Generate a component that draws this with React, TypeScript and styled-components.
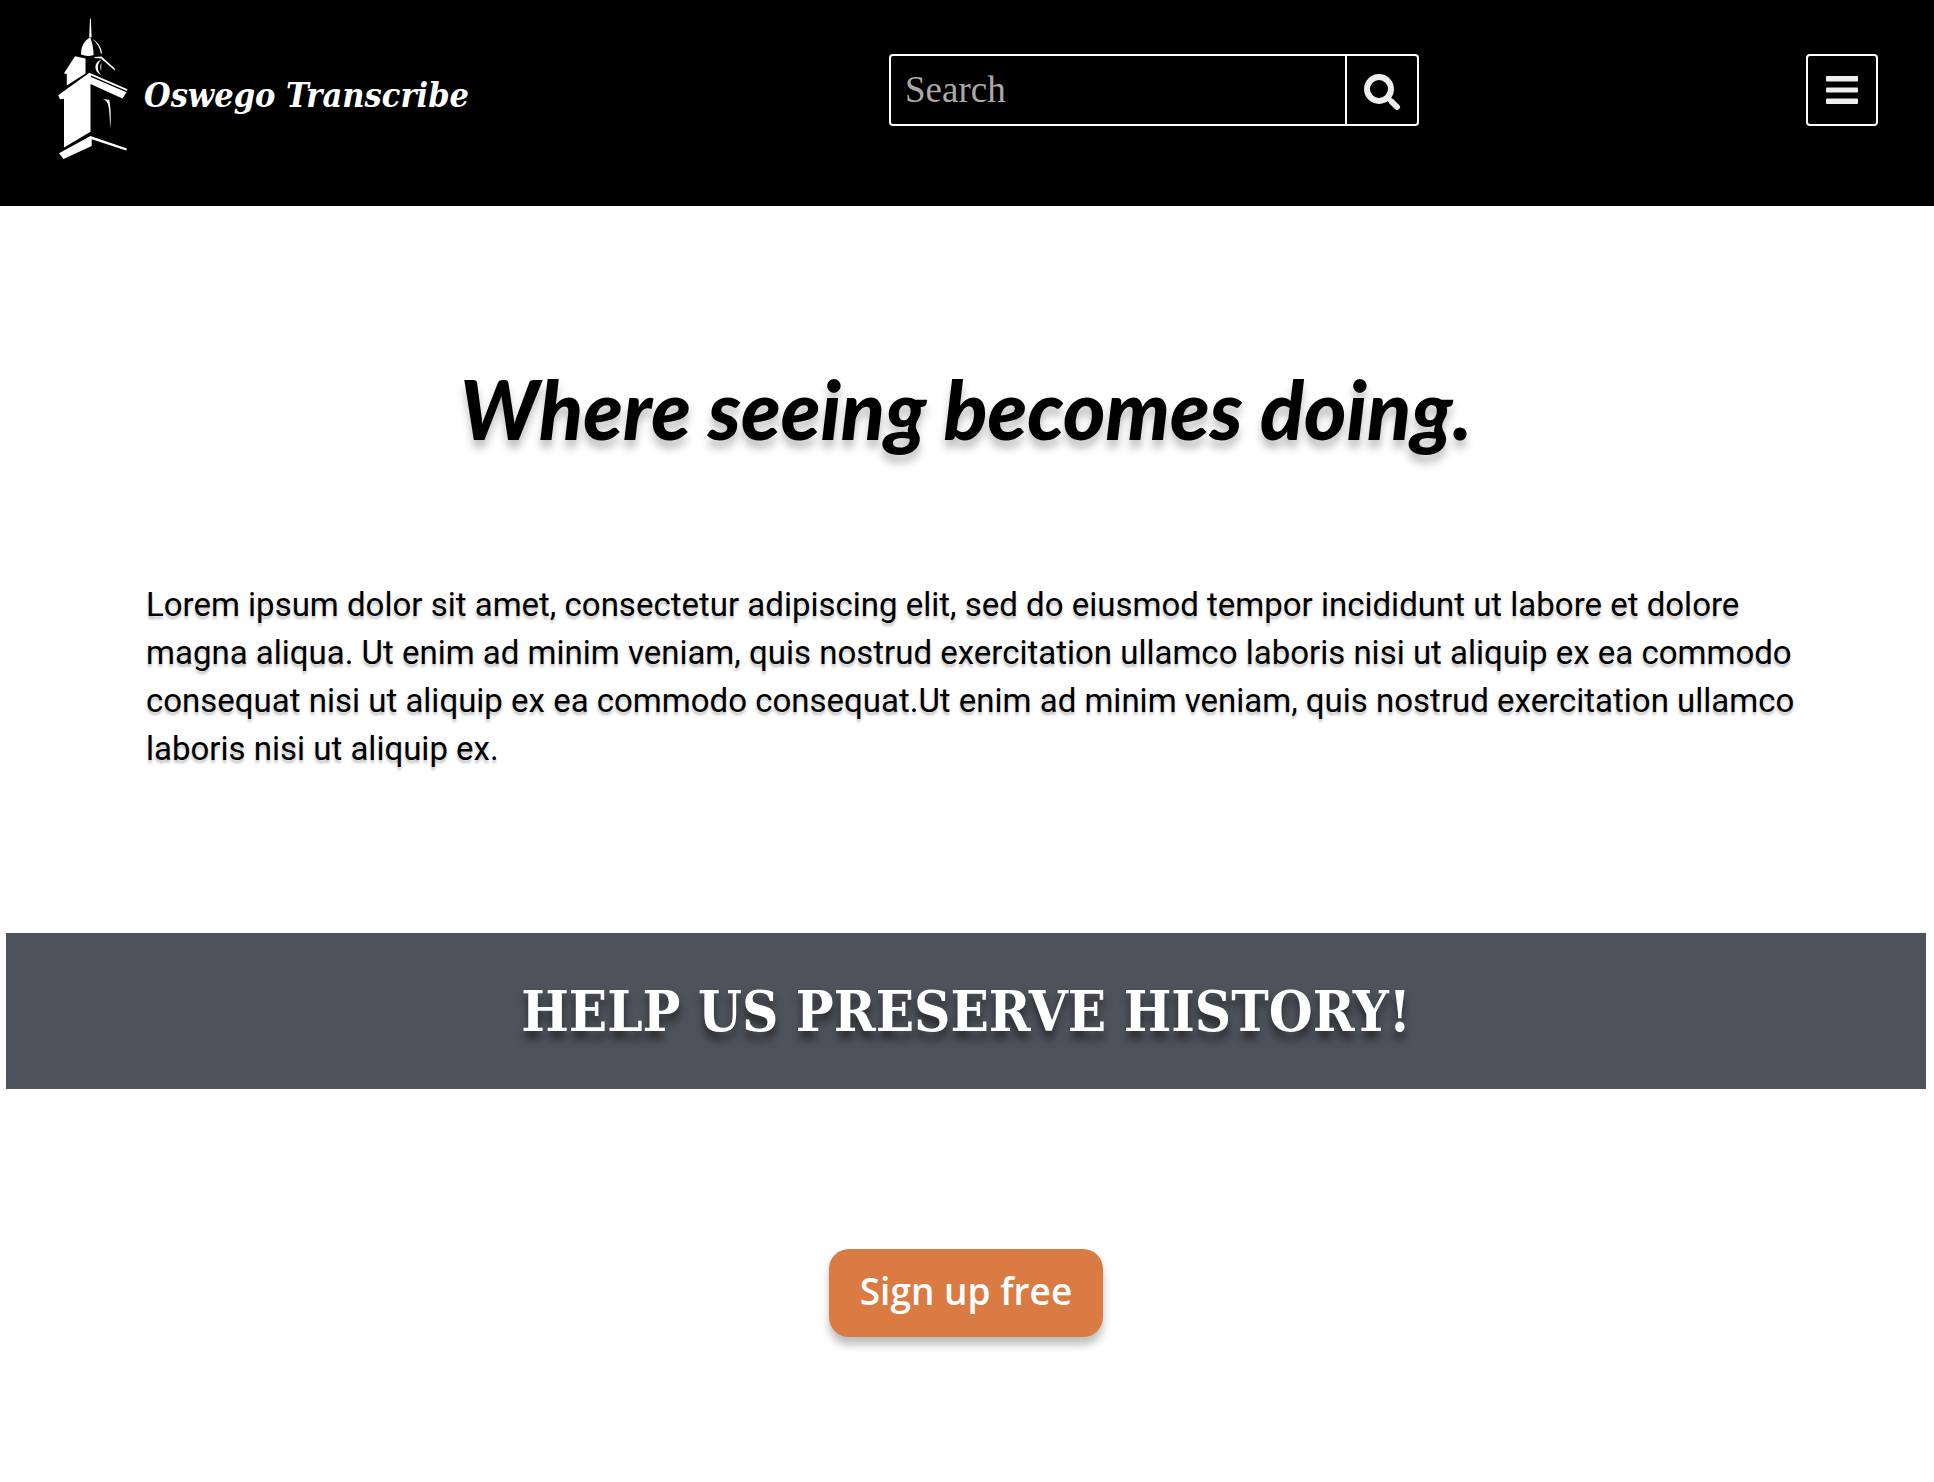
import React from "react";
import styled, { createGlobalStyle } from "styled-components";

const GlobalStyle = createGlobalStyle`
  *, *::before, *::after { box-sizing: border-box; }
  body { margin: 0; background: #fff; color: #000; }
`;

const Header = styled.header`
  display: flex;
  justify-content: space-between;
  align-items: flex-start;
  padding: 16px 56px 46px;
  background: #000;
`;

const Brand = styled.a`
  display: flex;
  align-items: center;
  gap: 16px;
  width: 446px;
  color: #fff;
  text-decoration: none;
`;

const BrandName = styled.span`
  padding-top: 14px;
  font: italic bold 34px/40px "DejaVu Serif Condensed", "DejaVu Serif", serif;
  white-space: nowrap;
`;

const SearchForm = styled.form`
  display: flex;
  width: 530px;
  height: 72px;
  margin-top: 38px;
  border: 2px solid #fff;
  border-radius: 4px;
`;

const SearchInput = styled.input`
  flex: 1;
  min-width: 0;
  padding: 0 14px;
  border: 0;
  outline: 0;
  background: transparent;
  color: #fff;
  font: 37px/48px "Liberation Serif", serif;
  &::placeholder { color: #a9a9a9; opacity: 1; }
`;

const SearchButton = styled.button`
  display: flex;
  align-items: center;
  justify-content: center;
  width: 72px;
  padding: 4px 0 0;
  border: 0;
  border-left: 2px solid #fff;
  background: transparent;
  color: #eee;
`;

const MenuButton = styled.button`
  display: flex;
  align-items: center;
  justify-content: center;
  width: 72px;
  height: 72px;
  margin-top: 38px;
  padding: 0;
  border: 2px solid #fff;
  border-radius: 4px;
  background: transparent;
  color: #eee;
`;

const Page = styled.main`
  padding: 0 8px 0 6px;
`;

const Hero = styled.section`
  padding: 155px 0 160px;
`;

const Title = styled.h1`
  margin: 0 0 124px;
  text-align: center;
  font: italic 900 81px/96px Lato, sans-serif;
  text-shadow: 0 8px 8px rgba(0, 0, 0, 0.25);
`;

const Intro = styled.p`
  margin: 0;
  padding: 0 128px 0 140px;
  font: 33px/48px Roboto, sans-serif;
  text-shadow: 0 3px 3px rgba(0, 0, 0, 0.25);
`;

const Banner = styled.h2`
  margin: 0;
  padding: 38px 0;
  background: #4e525b;
  color: #fff;
  text-align: center;
  font: bold 56px/80px "DejaVu Serif Condensed", "DejaVu Serif", serif;
  text-shadow: 0 8px 8px rgba(0, 0, 0, 0.5);
`;

const Actions = styled.div`
  display: flex;
  justify-content: center;
  padding: 160px 0;
`;

const SignUp = styled.button`
  height: 88px;
  padding: 0 31px 4px;
  border: 0;
  border-radius: 20px;
  background: #d97b43;
  color: #fff;
  font: 600 37px/48px "Open Sans", sans-serif;
  box-shadow: 0 8px 8px rgba(0, 0, 0, 0.25);
`;

const Tower = () => (
  <svg width="72" height="144" viewBox="0 0 72 144" fill="#fff" aria-hidden="true">
    <path d="M34 2.500h.8l.7 16v3h-2.200v-3z" />
    <path d="M34.300 21.500c2 5 3.200 11 3.300 17.500q-6 2-12.600-.4c0-8 3-14 9.300-17.100z" />
    <path d="M36.500 23c5 2.500 8.800 8 9.500 14.500l-1 .2c-1.200-6-4-11-8.500-14.700z" />
    <path d="M19 40.200l10.500 2.200v15.200L10.800 69.500V58.300L8 57.300z" />
    <path d="M38.500 41l7-.4L58.800 52.600v2L45 42.500l-6.500-.6z" />
    <path d="M45.500 43.500c-8 2.500-8 12-.5 15.500-4-4.500-4.500-11 .5-15.500z" />
    <path d="M45.500 47c-2 2-2 5.500-.3 8z" opacity=".7" />
    <path d="M33.300 56.700L71.500 73.300l-.6 1.700L35 59.500v1.500l35.500 15.300-4 6.200L34.500 68v47.700L8 131.500V82.700l-4 .6-1.800-4z" />
    <path d="M46.500 83l6.800.8c1.500 9 2 19 .9 28.500-.3-9-.8-19-2.200-24-1-3-3-4.500-5.500-5.300z" />
    <path d="M34.500 120L71 132.500l-.8 2-34.500-11.300V130L7.500 143l-4.500-5.700z" />
  </svg>
);

const App = () => (
  <>
    <GlobalStyle />
    <Header>
      <Brand href="#">
        <Tower />
        <BrandName>Oswego Transcribe</BrandName>
      </Brand>
      <SearchForm role="search">
        <SearchInput type="search" placeholder="Search" aria-label="Search" />
        <SearchButton type="button" aria-label="Submit search">
          <svg width="38" height="38" viewBox="0 0 38 38" fill="none" stroke="currentColor" aria-hidden="true">
            <circle cx="16" cy="16" r="12" strokeWidth="6" />
            <path d="M24 24l5 5" strokeWidth="5" />
            <path d="M29 29l5 5" strokeWidth="6" strokeLinecap="round" />
          </svg>
        </SearchButton>
      </SearchForm>
      <MenuButton type="button" aria-label="Menu">
        <svg width="32" height="30" viewBox="0 0 32 30" fill="currentColor" aria-hidden="true">
          <rect y="1" width="32" height="5.500" rx="1" />
          <rect y="12.500" width="32" height="5" rx="1" />
          <rect y="23.500" width="32" height="5.500" rx="1" />
        </svg>
      </MenuButton>
    </Header>
    <Page>
      <Hero>
        <Title>Where seeing becomes doing.</Title>
        <Intro>
          Lorem ipsum dolor sit amet, consectetur adipiscing elit, sed do eiusmod tempor incididunt ut
          labore et dolore magna aliqua. Ut enim ad minim veniam, quis nostrud exercitation ullamco
          laboris nisi ut aliquip ex ea commodo consequat nisi ut aliquip ex ea commodo consequat.Ut
          enim ad minim veniam, quis nostrud exercitation ullamco laboris nisi ut aliquip ex.
        </Intro>
      </Hero>
      <Banner>HELP US PRESERVE HISTORY!</Banner>
      <Actions>
        <SignUp type="button">Sign up free</SignUp>
      </Actions>
    </Page>
  </>
);

export default App;
